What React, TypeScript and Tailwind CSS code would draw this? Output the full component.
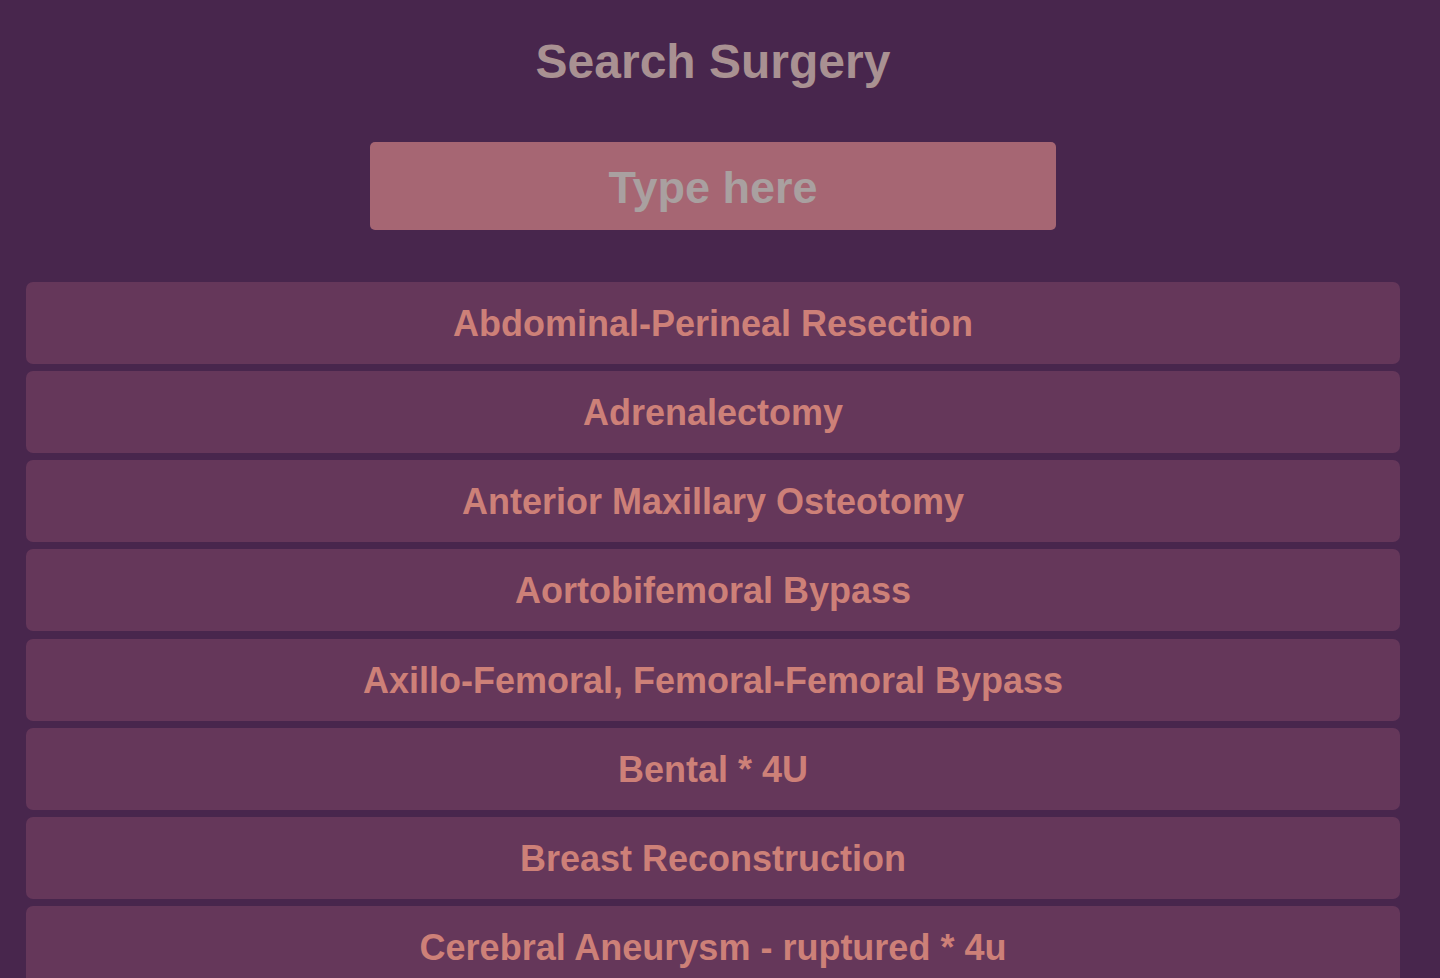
import React from 'react';

const surgeries = [
    'Abdominal-Perineal Resection',
    'Adrenalectomy',
    'Anterior Maxillary Osteotomy',
    'Aortobifemoral Bypass',
    'Axillo-Femoral, Femoral-Femoral Bypass',
    'Bental * 4U',
    'Breast Reconstruction',
    'Cerebral Aneurysm - ruptured * 4u',
];

const App = () => {
    return (
        <main className="h-screen overflow-hidden bg-[#48264d] font-['Liberation_Sans',Arial,sans-serif] pl-[26px] pr-[40px] pt-[34px]">
            <h1 className="text-center text-[48px] leading-[55px] font-bold text-[#a99192]">Search Surgery</h1>

            <div className="flex justify-center mt-[53px]">
                <input
                    type="text"
                    placeholder="Type here"
                    className="w-[686px] h-[88px] rounded-[5px] bg-[#a66673] pt-[4px] text-center text-[45px] font-bold text-[#a9a0a0] placeholder:text-[#a9a0a0] outline-none"
                />
            </div>

            {/* list of surgeries */}
            <ul className="mt-[52px] flex flex-col gap-[7.15px]">
                {surgeries.map((name) => (
                    <li
                        key={name}
                        className="h-[82px] shrink-0 rounded-[7px] bg-[#65375a] flex items-center justify-center pt-[2px] text-[36px] font-bold text-[#cd8078]"
                    >
                        {name}
                    </li>
                ))}
            </ul>
        </main>
    );
};

export default App;
